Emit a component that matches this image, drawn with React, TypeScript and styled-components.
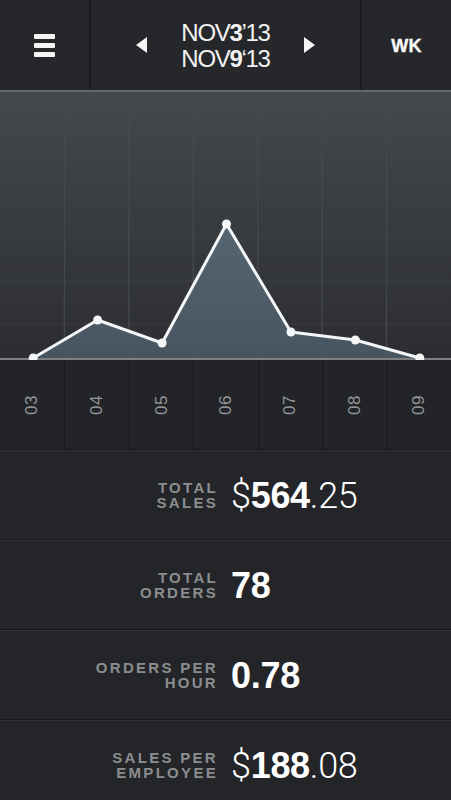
import React from 'react';
import styled, { createGlobalStyle } from 'styled-components';

const GlobalStyle = createGlobalStyle`
  html, body {
    margin: 0;
    padding: 0;
    background: #232528;
  }
  body {
    font-family: "Liberation Sans", Arial, sans-serif;
    color: #fff;
  }
`;

const Screen = styled.div`
  width: 451px;
  height: 800px;
  overflow: hidden;
  background: #232528;
  display: flex;
  flex-direction: column;
`;

const Header = styled.header`
  height: 90px;
  flex-shrink: 0;
  display: flex;
  background: #25272a;
`;

const SideCell = styled.div<{ $side: 'left' | 'right' }>`
  width: 89px;
  display: flex;
  align-items: center;
  justify-content: center;
  ${(p) => (p.$side === 'left' ? 'border-right' : 'border-left')}: 2px solid #1b1c1e;
`;

const Burger = styled.div`
  width: 21px;
  display: flex;
  flex-direction: column;
  gap: 4px;
  margin-top: 1px;

  span {
    display: block;
    height: 5px;
    border-radius: 1px;
    background: #f4f4f4;
  }
`;

const Week = styled.span`
  font-weight: 700;
  font-size: 18px;
  letter-spacing: 0.2px;
  color: #fafafa;
  margin-top: 2px;
  -webkit-text-stroke: 0.4px #fafafa;
`;

const Range = styled.div`
  flex: 1;
  display: flex;
  align-items: center;
  justify-content: center;
  gap: 34px;
`;

const Arrow = styled.div<{ $dir: 'left' | 'right' }>`
  width: 0;
  height: 0;
  border-top: 8px solid transparent;
  border-bottom: 8px solid transparent;
  ${(p) => (p.$dir === 'left' ? 'border-right' : 'border-left')}: 11px solid #f4f4f4;
`;

const Dates = styled.div`
  display: flex;
  flex-direction: column;
  align-items: center;
  font-size: 24px;
  line-height: 26px;
  letter-spacing: -1.3px;
  color: #f2f2f2;
  margin-top: 1px;

  b {
    font-weight: 700;
  }
`;

const Chart = styled.div`
  height: 270px;
  flex-shrink: 0;
  border-top: 2px solid #66696b;
  background: linear-gradient(#46494c, #2b2d30);
  box-sizing: border-box;

  svg {
    display: block;
  }
`;

const Axis = styled.div`
  height: 90px;
  flex-shrink: 0;
  display: grid;
  grid-template-columns: repeat(7, 1fr);
  background: #222427;
  border-bottom: 1px solid #18191b;
  box-sizing: border-box;
`;

const Tick = styled.div`
  display: flex;
  align-items: center;
  justify-content: center;
  border-left: 1px solid #17181a;

  &:first-child {
    border-left: none;
  }

  span {
    display: block;
    transform: rotate(-90deg);
    font-size: 17px;
    letter-spacing: 0.5px;
    color: #94979a;
  }
`;

const StatRow = styled.div`
  height: 90px;
  flex-shrink: 0;
  display: grid;
  grid-template-columns: 216px 1fr;
  column-gap: 15px;
  align-items: center;
  background: #232528;
  border-top: 1px solid #2e3033;
  border-bottom: 1px solid #18191b;
  box-sizing: border-box;
`;

const Label = styled.div`
  text-align: right;
  text-transform: uppercase;
  font-weight: 700;
  font-size: 15px;
  line-height: 15px;
  letter-spacing: 2.3px;
  margin-right: -2px;
  color: #8b8d90;
  white-space: pre-line;
`;

const Value = styled.div`
  font-size: 36px;
  line-height: 40px;
  color: #fff;
  letter-spacing: -0.3px;
  margin-top: 2px;

  b {
    font-weight: 700;
  }

  span {
    font-family: "Roboto", "Liberation Sans", sans-serif;
    font-weight: 300;
  }
`;

const points = [
  { day: '03', v: 268 },
  { day: '04', v: 230 },
  { day: '05', v: 253 },
  { day: '06', v: 134 },
  { day: '07', v: 242 },
  { day: '08', v: 250 },
  { day: '09', v: 268 },
];

const col = 451 / 7;

const SalesChart = () => {
  const xy = points.map((p, i) => [col * i + col / 2 + 1, p.v]);
  const line = xy.map(([x, y]) => `${x.toFixed(1)},${y}`).join(' ');
  const area = `${xy[0][0]},269 ${line} ${xy[xy.length - 1][0]},269`;
  return (
    <svg width="451" height="268" viewBox="0 2 451 268">
      <defs>
        <linearGradient id="area-fill" x1="0" y1="130" x2="0" y2="270" gradientUnits="userSpaceOnUse">
          <stop offset="0" stopColor="#576874" />
          <stop offset="1" stopColor="#485763" />
        </linearGradient>
      </defs>
      {[1, 2, 3, 4, 5, 6].map((i) => (
        <line key={`v${i}`} x1={col * i} y1="0" x2={col * i} y2="270" stroke="#484b4e" strokeWidth="1.5" opacity="0.8" />
      ))}
      {[19, 62, 105, 148, 191, 234].map((y) => (
        <line key={`h${y}`} x1="0" y1={y} x2="451" y2={y} stroke="#4a4d50" strokeWidth="1" opacity="0.45" />
      ))}
      <polygon points={area} fill="url(#area-fill)" opacity="0.95" />
      <line x1="0" y1="269" x2="451" y2="269" stroke="#7d8083" strokeWidth="2" />
      <polyline points={line} fill="none" stroke="#f4f6f7" strokeWidth="3" strokeLinejoin="round" />
      {xy.map(([x, y], i) => (
        <circle key={i} cx={x} cy={y} r="4.5" fill="#f4f6f7" />
      ))}
    </svg>
  );
};

export default function App() {
  return (
    <Screen>
      <GlobalStyle />
      <Header>
        <SideCell $side="left">
          <Burger>
            <span />
            <span />
            <span />
          </Burger>
        </SideCell>
        <Range>
          <Arrow $dir="left" />
          <Dates>
            <div>
              NOV<b>3</b>’13
            </div>
            <div>
              NOV<b>9</b>‘13
            </div>
          </Dates>
          <Arrow $dir="right" />
        </Range>
        <SideCell $side="right">
          <Week>WK</Week>
        </SideCell>
      </Header>
      <Chart>
        <SalesChart />
      </Chart>
      <Axis>
        {points.map((p) => (
          <Tick key={p.day}>
            <span>{p.day}</span>
          </Tick>
        ))}
      </Axis>
      <StatRow>
        <Label>{'Total\nSales'}</Label>
        <Value>
          <span>$</span>
          <b>564</b>
          <span>.25</span>
        </Value>
      </StatRow>
      <StatRow>
        <Label>{'Total\nOrders'}</Label>
        <Value>
          <b>78</b>
        </Value>
      </StatRow>
      <StatRow>
        <Label>{'Orders per\nHour'}</Label>
        <Value>
          <b>0.78</b>
        </Value>
      </StatRow>
      <StatRow>
        <Label>{'Sales per\nEmployee'}</Label>
        <Value>
          <span>$</span>
          <b>188</b>
          <span>.08</span>
        </Value>
      </StatRow>
    </Screen>
  );
}
